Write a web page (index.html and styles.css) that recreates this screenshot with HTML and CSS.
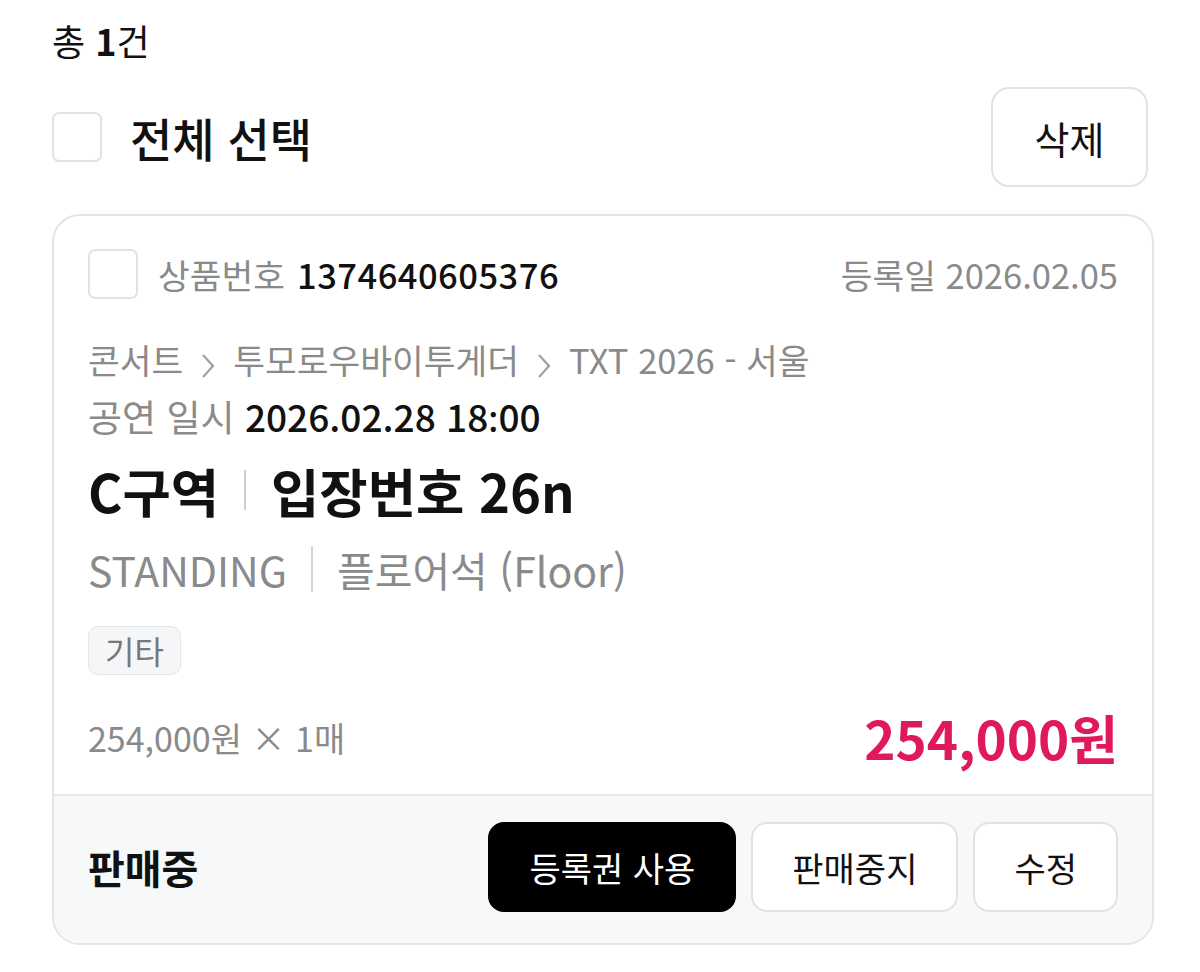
FILE: index.html
```html
<!DOCTYPE html>
<html lang="ko">
<head>
<meta charset="utf-8">
<link rel="stylesheet" href="styles.css">
</head>
<body>
<div class="page">
  <div class="total">총 <b>1</b>건</div>
  <div class="select-row">
    <label class="select-all"><span class="checkbox"></span><span class="select-label">전체 선택</span></label>
    <button class="btn delete">삭제</button>
  </div>
  <div class="card">
    <div class="card-body">
      <div class="row-top">
        <div class="prod">
          <span class="checkbox small"></span>
          <span class="gray">상품번호</span>
          <span class="prod-no">1374640605376</span>
        </div>
        <div class="gray">등록일 2026.02.05</div>
      </div>
      <div class="crumbs">
        <span>콘서트</span>
        <svg class="chev" viewBox="0 0 16 28" width="16" height="28"><path d="M3 3 L13 14 L3 25" fill="none" stroke="#a0a0a0" stroke-width="2.2"/></svg>
        <span>투모로우바이투게더</span>
        <svg class="chev" viewBox="0 0 16 28" width="16" height="28"><path d="M3 3 L13 14 L3 25" fill="none" stroke="#a0a0a0" stroke-width="2.2"/></svg>
        <span>TXT 2026 - 서울</span>
      </div>
      <div class="date"><span class="gray">공연 일시</span> <span class="date-val">2026.02.28 18<span class="colon">:</span>00</span></div>
      <div class="title"><span>C구역</span><span class="vbar"></span><span>입장번호 26n</span></div>
      <div class="seat"><span>STANDING</span><span class="vbar light"></span><span>플로어석 (Floor)</span></div>
      <div class="tags"><span class="tag">기타</span></div>
      <div class="price-row">
        <span class="qty">254,000원 × 1매</span>
        <span class="price">254,000원</span>
      </div>
    </div>
    <div class="card-foot">
      <span class="status">판매중</span>
      <div class="actions">
        <button class="btn dark">등록권 사용</button>
        <button class="btn">판매중지</button>
        <button class="btn">수정</button>
      </div>
    </div>
  </div>
</div>
</body>
</html>
```

FILE: styles.css
```css
* { box-sizing: border-box; }
body {
  margin: 0;
  background: #fff;
  font-family: "Noto Sans CJK KR", "Noto Sans", sans-serif;
  color: #111;
}
.page {
  padding: 20px 46px 0 52px;
  width: 1200px;
}
.total {
  font-size: 36px;
  line-height: 40px;
  height: 40px;
}
.total b { font-weight: 700; }
.select-row {
  margin-top: 27px;
  display: flex;
  justify-content: space-between;
  align-items: center;
}
.select-all {
  display: flex;
  align-items: center;
  gap: 28px;
}
.checkbox {
  display: inline-block;
  width: 50px;
  height: 50px;
  border: 2px solid #e2e2e2;
  border-radius: 7px;
  background: #fff;
}
.select-label {
  font-size: 46px;
  line-height: 50px;
  font-weight: 500;
}
.btn {
  font-family: inherit;
  font-size: 34px;
  color: #111;
  background: #fff;
  border: 2px solid #e2e2e2;
  border-radius: 16px;
  padding: 0 39px;
  height: 89px;
  cursor: pointer;
}
.btn.delete {
  font-size: 38px;
  width: 157px;
  height: 100px;
  padding: 0;
  border-radius: 18px;
  margin-right: 6px;
}
.btn.dark {
  background: #000;
  border-color: #000;
  color: #fff;
}
.card {
  margin-top: 27px;
  width: 1102px;
  border: 2px solid #e4e5e7;
  border-radius: 28px;
  overflow: hidden;
}
.card-body {
  padding: 33px 34px 27px 34px;
}
.gray { color: #8a8a8a; }
.row-top {
  display: flex;
  justify-content: space-between;
  align-items: center;
  font-size: 34.5px;
  line-height: 50px;
}
.prod {
  display: flex;
  align-items: center;
  gap: 12px;
}
.checkbox.small { margin-right: 8px; }
.prod-no { font-weight: 500; color: #111; letter-spacing: 0.5px; }
.crumbs {
  margin-top: 32px;
  display: flex;
  align-items: center;
  gap: 17px;
  font-size: 34.5px;
  line-height: 57px;
  color: #8a8a8a;
}
.chev { margin-top: 12px; }
.date {
  font-size: 37px;
  line-height: 57px;
}
.date-val { font-weight: 500; color: #111; }
.colon { font-family: "Noto Sans", sans-serif; }
.title {
  margin-top: 14px;
  display: flex;
  align-items: center;
  font-size: 52.5px;
  line-height: 60px;
  font-weight: 700;
}
.vbar {
  display: inline-block;
  width: 2px;
  height: 40px;
  background: #cfcfcf;
  margin: 0 25px;
}
.seat {
  margin-top: 22px;
  display: flex;
  align-items: center;
  font-size: 41px;
  line-height: 54px;
  color: #8a8a8a;
}
.vbar.light { height: 46px; margin: 0 24px; background: #d4d4d4; }
.tags { margin-top: 30px; display: flex; }
.tag {
  display: inline-block;
  font-size: 32px;
  line-height: 47px;
  padding: 0 16px;
  color: #777;
  background: #f5f6f7;
  border: 1px solid #e5e6e8;
  border-radius: 10px;
}
.price-row {
  margin-top: 32px;
  display: flex;
  justify-content: space-between;
  align-items: center;
  height: 60px;
}
.qty {
  font-size: 34px;
  color: #8a8a8a;
}
.price {
  font-size: 53px;
  font-weight: 700;
  color: #e0195b;
}
.card-foot {
  background: #f7f8fa;
  border-top: 2px solid #e6e7e9;
  display: flex;
  justify-content: space-between;
  align-items: center;
  padding: 26px 34px 31px 34px;
}
.status {
  font-size: 40px;
  font-weight: 700;
}
.actions {
  display: flex;
  gap: 15px;
}
.actions .btn { height: 90px; border-radius: 16px; }
```
